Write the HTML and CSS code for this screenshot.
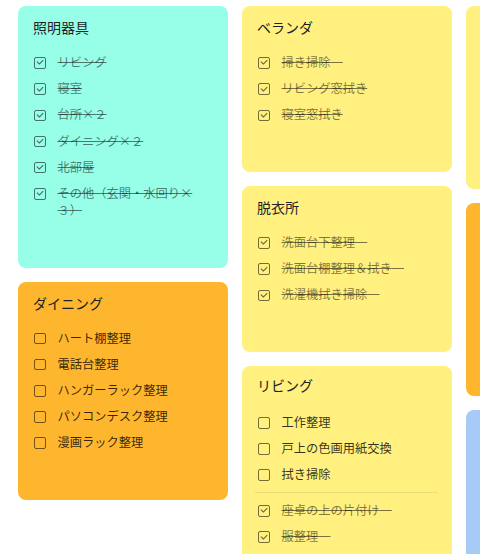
FILE: index.html
```html
<!DOCTYPE html>
<html lang="ja">
<head>
<meta charset="utf-8">
<title>メモ</title>
<link rel="stylesheet" href="styles.css">
</head>
<body>
<div class="board">
  <div class="column">
    <section class="card teal">
      <h2 class="title">照明器具</h2>
      <ul class="list">
        <li class="item done"><span class="box"></span><span class="label">リビング</span></li>
        <li class="item done"><span class="box"></span><span class="label">寝室</span></li>
        <li class="item done"><span class="box"></span><span class="label">台所×２</span></li>
        <li class="item done"><span class="box"></span><span class="label">ダイニング×２</span></li>
        <li class="item done"><span class="box"></span><span class="label">北部屋</span></li>
        <li class="item done"><span class="box"></span><span class="label">その他（玄関・水回り×３）</span></li>
      </ul>
    </section>
    <section class="card orange">
      <h2 class="title">ダイニング</h2>
      <ul class="list">
        <li class="item"><span class="box"></span><span class="label">ハート棚整理</span></li>
        <li class="item"><span class="box"></span><span class="label">電話台整理</span></li>
        <li class="item"><span class="box"></span><span class="label">ハンガーラック整理</span></li>
        <li class="item"><span class="box"></span><span class="label">パソコンデスク整理</span></li>
        <li class="item"><span class="box"></span><span class="label">漫画ラック整理</span></li>
      </ul>
    </section>
  </div>

  <div class="column">
    <section class="card yellow">
      <h2 class="title">ベランダ</h2>
      <ul class="list">
        <li class="item done"><span class="box"></span><span class="label trail">掃き掃除</span></li>
        <li class="item done"><span class="box"></span><span class="label">リビング窓拭き</span></li>
        <li class="item done"><span class="box"></span><span class="label">寝室窓拭き</span></li>
      </ul>
    </section>
    <section class="card yellow">
      <h2 class="title">脱衣所</h2>
      <ul class="list">
        <li class="item done"><span class="box"></span><span class="label trail">洗面台下整理</span></li>
        <li class="item done"><span class="box"></span><span class="label trail">洗面台棚整理＆拭き</span></li>
        <li class="item done"><span class="box"></span><span class="label trail">洗濯機拭き掃除</span></li>
      </ul>
    </section>
    <section class="card yellow">
      <h2 class="title title-tight">リビング</h2>
      <ul class="list">
        <li class="item"><span class="box"></span><span class="label">工作整理</span></li>
        <li class="item"><span class="box"></span><span class="label">戸上の色画用紙交換</span></li>
        <li class="item"><span class="box"></span><span class="label">拭き掃除</span></li>
      </ul>
      <hr class="divider">
      <ul class="list">
        <li class="item done"><span class="box"></span><span class="label trail">座卓の上の片付け</span></li>
        <li class="item done"><span class="box"></span><span class="label trail">服整理</span></li>
      </ul>
    </section>
  </div>

  <div class="column">
    <section class="card yellow card-peek-a"></section>
    <section class="card orange card-peek-b"></section>
    <section class="card blue card-peek-c"></section>
  </div>
</div>
</body>
</html>
```

FILE: styles.css
```css
html, body {
  margin: 0;
  padding: 0;
  overflow: hidden;
  background: #ffffff;
}

body {
  font-family: "Noto Sans CJK JP", "Noto Sans", sans-serif;
  color: #202124;
}

.board {
  display: flex;
  align-items: flex-start;
  gap: 14px;
  padding: 6px 18px;
}

.column {
  display: flex;
  flex-direction: column;
  gap: 14px;
  width: 210px;
  flex-shrink: 0;
}

.card {
  border-radius: 8px;
  padding: 11px 0 44px;
  box-sizing: border-box;
}

.card-peek-a { height: 183px; }
.card-peek-b { height: 193px; }
.card-peek-c { height: 260px; }

.teal { background: #97ffe8; }
.orange { background: #ffb62f; }
.yellow { background: #fff07f; }
.blue { background: #a7cbf7; }

.title {
  margin: 0 0 12.4px;
  padding: 0 15px;
  font-size: 14px;
  line-height: 20px;
  font-weight: 400;
  color: #202124;
}

.title-tight {
  margin-top: -1.5px;
  margin-bottom: 13.9px;
}

.list {
  list-style: none;
  margin: 0;
  padding: 0;
}

.item {
  display: flex;
  align-items: flex-start;
  gap: 12px;
  padding: 4.6px 28px 4.6px 16px;
  font-size: 12.25px;
  line-height: 17px;
  color: rgba(0, 0, 0, 0.8);
}

.box {
  position: relative;
  flex: 0 0 auto;
  width: 11.5px;
  height: 11.5px;
  margin-top: 3.2px;
  box-sizing: border-box;
  border: 1.7px solid rgba(0, 0, 0, 0.55);
  border-radius: 2px;
}

.done .box::after {
  content: "";
  position: absolute;
  left: 2.6px;
  top: 0.2px;
  width: 2.6px;
  height: 5.4px;
  border-right: 1.3px solid rgba(0, 0, 0, 0.6);
  border-bottom: 1.3px solid rgba(0, 0, 0, 0.6);
  transform: rotate(45deg);
}

.label {
  min-width: 0;
}

.done .label {
  color: rgba(0, 0, 0, 0.52);
  text-decoration: line-through;
}

.trail::after {
  content: "\3000";
  white-space: pre;
}

.divider {
  margin: 4.5px 14px 4px 13px;
  border: 0;
  height: 1px;
  background: rgba(0, 0, 0, 0.08);
}
```
